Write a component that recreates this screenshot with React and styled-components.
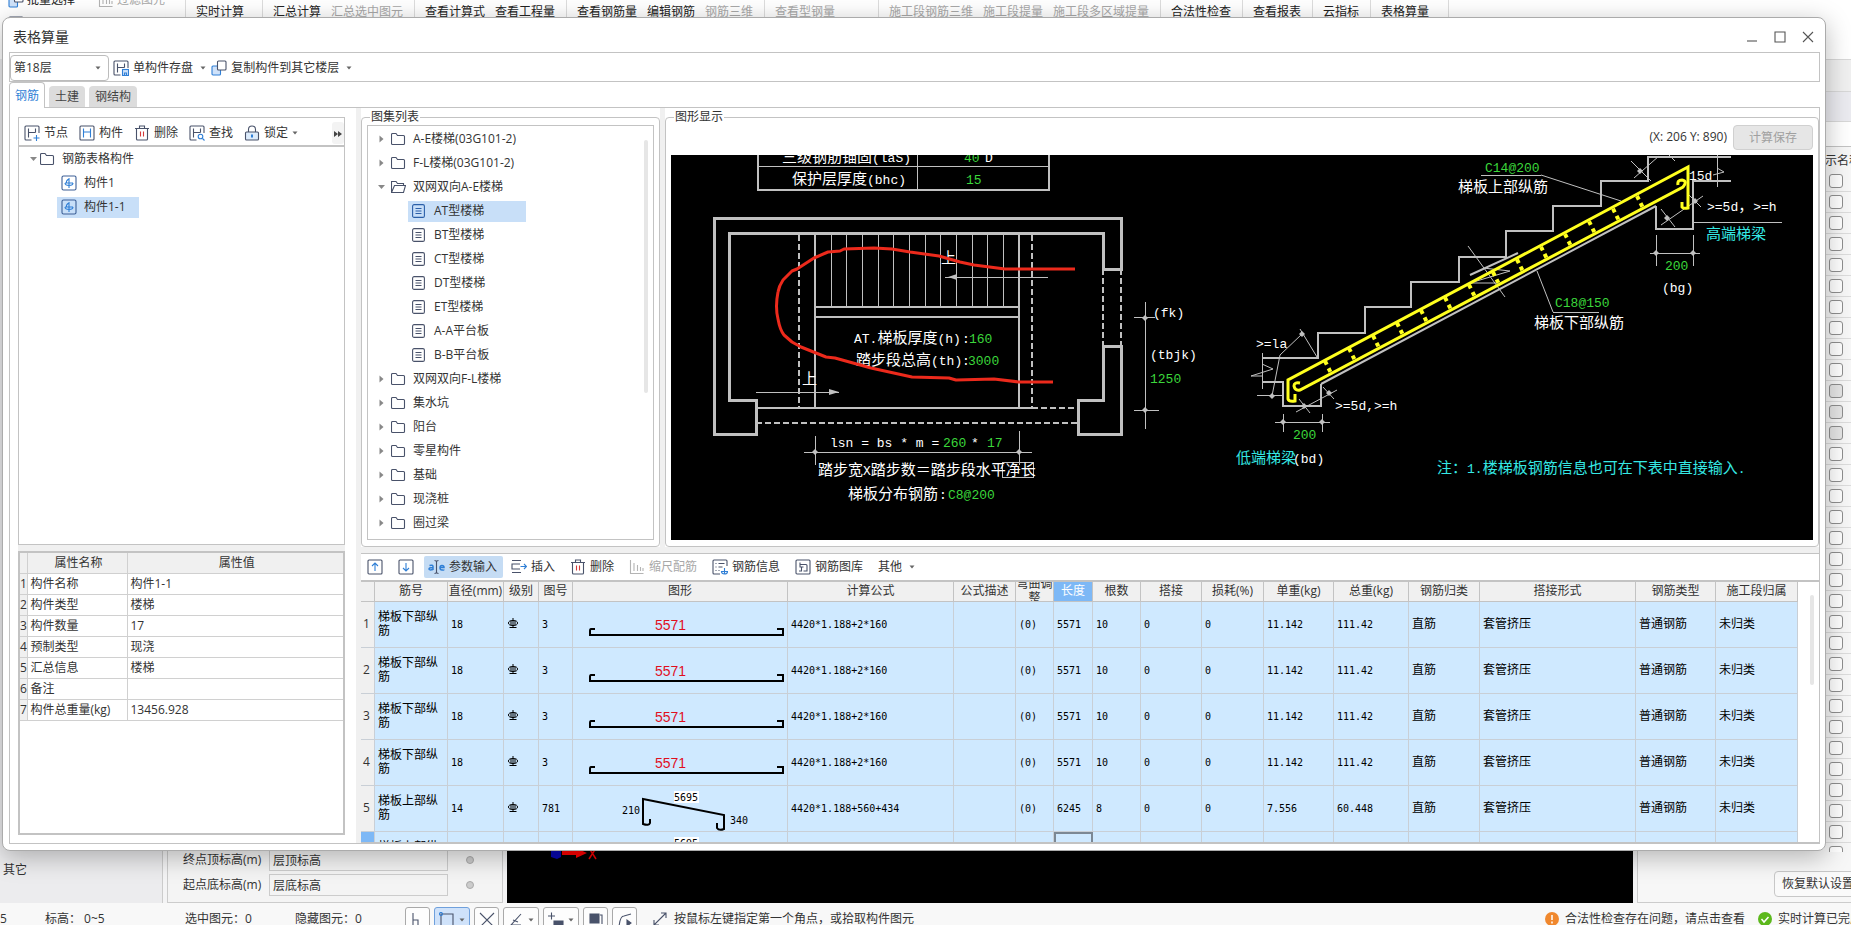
import React from 'react'
import styled, { createGlobalStyle, css } from 'styled-components'

const GlobalStyle = createGlobalStyle`
* {
  box-sizing: border-box;
}
body {
  margin: 0;
  overflow: hidden;
  background: #fff;
}
body, button, input, select, table {
  font-family: "Open Sans", "Noto Sans CJK SC", sans-serif;
  font-size: 12px;
  line-height: 16px;
  color: #333;
}
button {
  border: 0;
  padding: 0;
  background: none;
  white-space: nowrap;
}
`

const line = '#c3c3c3'
const ink = '#49526a'
const blue = '#2f7fd6'

/* ---------- main window behind the dialog ---------- */

const Shell = styled.div`
  position: relative;
  display: flex;
  flex-direction: column;
  height: 100vh;
  overflow: hidden;
  background: #f4f4f5;
`
const Ribbon = styled.header`
  display: flex;
  flex: none;
  height: 59px;
  background: #fff;
`
const RibbonTools = styled.div`
  width: 186px;
  padding-left: 8px;
  border-right: 1px solid #ddd;
  margin-top: -10px;
`
const ToolLine = styled.div`
  display: flex;
  align-items: center;
  gap: 3px;
  height: 20px;
  margin-bottom: 4px;
`
const RibbonGroup = styled.div`
  display: flex;
  gap: 10px;
  width: ${p => p.$w}px;
  padding: 4px 0 0 10px;
  border-right: 1px solid #ddd;
`
const RibbonItem = styled.button`
  height: 16px;
  color: ${p => (p.disabled ? '#a8a8a8' : '#222')};
`
const Workspace = styled.main`
  display: flex;
  flex: 1;
  min-height: 0;
`
const NavDock = styled.nav`
  display: flex;
  flex-direction: column;
  justify-content: flex-end;
  width: 163px;
  padding: 0 3px 25px;
  background: #ececee;
  border-right: 1px solid #ccc;
`
const PropDock = styled.section`
  display: flex;
  flex-direction: column;
  justify-content: flex-end;
  gap: 3px;
  width: 336px;
  margin-left: 4px;
  padding-bottom: 6px;
  border: 1px solid #ccc;
  background: #f4f4f4;
`
const PropRow = styled.div`
  display: grid;
  grid-template-columns: 80px 179px 8px;
  align-items: center;
  gap: 0 6px;
  padding-left: 15px;
  input {
    height: 22px;
    padding: 0 3px;
    border: 1px solid #ccc;
    background: #f4f4f4;
  }
`
const Dot = styled.span`
  width: 8px;
  height: 8px;
  margin-left: 12px;
  border: 1px solid #aaa;
  border-radius: 50%;
  background: #ccc;
`
const ModelView = styled.section`
  display: flex;
  align-items: flex-end;
  flex: 1;
  margin-left: 4px;
  padding: 0 0 42px 44px;
  background: #000;
`
const LayerDock = styled.aside`
  display: flex;
  flex-direction: column;
  width: 214px;
  margin-left: 4px;
  border-left: 1px solid #ccc;
  border-bottom: 1px solid #ccc;
  background: #f7f7f7;
`
const DockBand = styled.div`
  flex: none;
  height: ${p => p.$h}px;
  border-top: 1px solid #d8d8d8;
  background: ${p => p.$bg};
`
const DockHead = styled.div`
  flex: none;
  height: 25px;
  padding: 6px 0 0 175px;
  white-space: nowrap;
  overflow: hidden;
  border-top: 1px solid ${line};
`
const LayerList = styled.div`
  flex: 1;
  min-height: 0;
  overflow: hidden;
`
const LayerRow = styled.div`
  display: flex;
  align-items: center;
  justify-content: flex-end;
  height: 21px;
  padding-right: 8px;
  border-bottom: 1px solid #dcdcdc;
`
const Tick = styled.input`
  appearance: none;
  width: 14px;
  height: 14px;
  margin: 0;
  border: 1px solid #8f8f8f;
  border-radius: 3px;
  background: ${p => (p.disabled ? '#e6e6e6' : '#fff')};
`
const DockFoot = styled.div`
  display: flex;
  flex: none;
  justify-content: flex-end;
  height: 50px;
  padding-top: 19px;
  overflow: hidden;
`
const ResetButton = styled.button`
  flex: none;
  width: 96px;
  height: 26px;
  margin-right: -19px;
  padding-right: 8px;
  border: 1px solid #c8c8c8;
  border-radius: 4px;
  background: #fafafa;
`
const StatusBar = styled.footer`
  display: flex;
  flex: none;
  gap: 6px;
  height: 22px;
  overflow: hidden;
  line-height: 32px;
  white-space: nowrap;
  background: #f8f8f8;
`
const StatusText = styled.span`
  display: flex;
  align-items: center;
  flex: none;
  gap: 6px;
  width: ${p => (p.$w ? p.$w + 'px' : 'auto')};
  height: 32px;
  svg {
    flex: none;
  }
`
const StatusTools = styled.div`
  display: flex;
  gap: 4px;
  padding: 4px 9px 0 0;
`
const SnapButton = styled.button`
  display: flex;
  flex: none;
  align-items: center;
  justify-content: center;
  gap: 4px;
  width: ${p => (p.$wide ? 36 : 25)}px;
  height: 26px;
  border: 1px solid ${p => (p.$on ? '#6fa0dc' : '#a9a9a9')};
  border-radius: 3px;
  background: ${p => (p.$on ? '#cfe2fa' : '#fdfdfd')};
`
const Spacer = styled.span`
  flex: 1;
`

/* ---------- dialog ---------- */

const Dialog = styled.section`
  position: absolute;
  top: 17px;
  right: 25px;
  bottom: 74px;
  left: 2px;
  display: flex;
  flex-direction: column;
  padding: 0 5px 6px 6px;
  border: 1px solid #ababab;
  border-radius: 8px;
  background: #fff;
  box-shadow: 0 6px 26px rgba(0, 0, 0, 0.28);
`
const TitleBar = styled.div`
  display: flex;
  align-items: center;
  gap: 12px;
  flex: none;
  height: 34px;
  padding: 4px 4px 0;
`
const Title = styled.h1`
  flex: 1;
  margin: 0;
  font-size: 14px;
  font-weight: 400;
  line-height: 20px;
`
const WinButton = styled.button`
  display: flex;
  justify-content: center;
  width: 16px;
`
const FloorBar = styled.div`
  display: flex;
  align-items: center;
  flex: none;
  gap: 5px;
  height: 30px;
  padding-top: 1px;
  border: 1px solid ${line};
`
const FloorPick = styled.label`
  display: grid;
  grid-template-columns: 1fr 14px;
  align-items: center;
  width: 99px;
  margin-right: -1px;
  select, svg {
    grid-row: 1;
  }
  select {
    grid-column: 1 / 3;
    height: 26px;
    padding: 0 3px;
    appearance: none;
    border: 1px solid #bcbcbc;
    border-radius: 4px;
    background: #fff;
  }
  svg {
    grid-column: 2;
  }
`
const Tool = styled.button`
  display: flex;
  align-items: center;
  flex: none;
  gap: 4px;
  height: 22px;
  color: ${p => (p.disabled ? '#a8a8a8' : '#333')};
  ${p => p.$on && css`
    margin: 0 -7px 0 -5px;
    padding: 0 6px 0 4px;
    border-radius: 2px;
    background: #c5dcf4;
  `}
`
const Tabs = styled.div`
  display: flex;
  align-items: flex-end;
  gap: 4px;
  flex: none;
  height: 25px;
`
const Tab = styled.button`
  height: ${p => (p.$on ? 26 : 21)}px;
  padding: 0 6px;
  border-radius: 4px 4px 0 0;
  background: ${p => (p.$on ? '#fff' : '#dcdcdc')};
  color: ${p => (p.$on ? blue : '#444')};
  ${p => p.$on && css`
    margin-bottom: -1px;
    border: 1px solid ${line};
    border-bottom: 0;
    padding: 0 5px;
    z-index: 1;
  `}
`
const Page = styled.div`
  display: flex;
  flex: 1;
  min-height: 0;
  border: 1px solid ${line};
`
const LeftPane = styled.div`
  display: grid;
  grid-template-rows: minmax(0, 427fr) minmax(0, 284fr);
  gap: 6px;
  width: 346px;
  flex: none;
  padding: 9px 11px 8px 8px;
`
const TreePane = styled.div`
  display: flex;
  flex-direction: column;
  min-width: 0;
  border: 1px solid ${line};
  box-shadow: 0 6px 0 #f0f0f0;
`
const TreeTools = styled.div`
  display: flex;
  align-items: center;
  gap: 11px;
  height: 29px;
  padding: 2px 0 0 5px;
  border-bottom: 2px solid ${line};
`
const MoreButton = styled.button`
  width: 12px;
  height: 22px;
  margin-left: auto;
  border-radius: 3px;
  background: #f3f3f3;
`
const TreeRow = styled.button`
  display: flex;
  align-items: center;
  height: 24px;
  padding-left: ${p => p.$pad}px;
  text-align: left;
`
const TreeLabel = styled.span`
  display: flex;
  align-items: center;
  gap: ${p => (p.$wide ? 9 : 7)}px;
  height: 21px;
  padding-left: 4px;
  padding-right: ${p => (p.$wide ? 42 : 13)}px;
  background: ${p => (p.$on ? '#c8dff8' : 'none')};
`
const RootLabel = styled.span`
  display: flex;
  align-items: center;
  gap: 7px;
  padding-left: ${p => (p.$tight ? 3 : 6)}px;
`
const PropPane = styled.div`
  border: 2px solid ${line};
  background: #fff;
`
const PropTable = styled.table`
  width: 100%;
  table-layout: fixed;
  border-collapse: collapse;
  th, td {
    height: 21px;
    padding: 0 0 0 3px;
    border-right: 1px solid #d0d0d0;
    border-bottom: 1px solid #d0d0d0;
    font-weight: 400;
    text-align: left;
    white-space: nowrap;
  }
  th:last-child, td:last-child {
    border-right: 0;
  }
  thead th {
    text-align: center;
    background: #f0f0f0;
  }
  tbody th {
    padding: 0;
    background: #f0f0f0;
  }
`
const Splitter = styled.div`
  flex: none;
  width: 5px;
  background: #f0f0f0;
`
const RightPane = styled.div`
  display: grid;
  flex: 1;
  min-width: 0;
  grid-template-rows: minmax(0, 438fr) minmax(0, 290fr);
  gap: 6px;
  background: #f0f0f0;
`
const TopRow = styled.div`
  display: grid;
  grid-template-columns: 299px minmax(0, 1fr);
  gap: 5px;
`
const White = styled.div`
  display: flex;
  min-width: 0;
  min-height: 0;
  padding-top: 1px;
  background: #fff;
`
const Group = styled.fieldset`
  display: flex;
  flex: 1;
  flex-direction: column;
  min-width: 0;
  margin: 0;
  padding: 0 5px 6px;
  border: 1px solid ${line};
  border-radius: 4px;
  legend {
    margin-left: 3px;
    padding: 0 1px;
    line-height: 16px;
  }
`
const AtlasList = styled.div`
  display: flex;
  flex: 1;
  justify-content: space-between;
  min-height: 0;
  overflow: hidden;
  padding: 1px 5px 0 0;
  border: 1px solid ${line};
`
const AtlasRows = styled.div`
  display: flex;
  flex-direction: column;
`
const ScrollThumb = styled.div`
  width: 4px;
  height: ${p => p.$h}px;
  margin-top: 13px;
  border-radius: 2px;
  background: #e6e6e6;
`
const ViewHead = styled.div`
  display: flex;
  justify-content: flex-end;
  gap: 6px;
  flex: none;
  height: 30px;
  line-height: 24px;
`
const SaveButton = styled.button`
  width: 80px;
  height: 25px;
  border: 1px solid #d0d0d0;
  border-radius: 4px;
  background: #e6e6e6;
  color: #a0a0a0;
`
const Canvas = styled.div`
  flex: 1;
  min-height: 0;
  overflow: hidden;
  background: #000;
  svg {
    display: block;
    width: 100%;
    height: 100%;
  }
`
const BarPane = styled.div`
  display: flex;
  flex-direction: column;
  min-width: 0;
  min-height: 0;
  border-top: 1px solid ${line};
  border-bottom: 1px solid ${line};
  background: #fff;
`
const BarTools = styled.div`
  display: flex;
  align-items: center;
  flex: none;
  gap: 15px;
  height: 28px;
  padding-left: 6px;
  border-bottom: 2px solid ${line};
`
const BarBody = styled.div`
  display: flex;
  justify-content: space-between;
  flex: 1;
  min-height: 0;
  padding-right: 5px;
  overflow: hidden;
`
const BarTable = styled.table`
  width: calc(100% - 16px);
  height: fit-content;
  table-layout: fixed;
  border-collapse: separate;
  border-spacing: 0;
  th, td {
    padding: 0 0 0 3px;
    font-weight: 400;
    text-align: left;
    border-right: 1px solid #c9cfd6;
    border-bottom: 1px solid #c9cfd6;
  }
  thead th {
    height: 20px;
    padding: 0;
    background: #f0f0f0;
    border-color: ${line};
  }
  tbody td {
    height: 46px;
    color: #000;
    line-height: 14px;
    background: #cfe9ff;
  }
  tbody th {
    background: #f0f0f0;
  }
`
const HeadCell = styled.div`
  display: flex;
  align-items: center;
  justify-content: center;
  height: 19px;
  overflow: hidden;
  text-align: center;
  line-height: 14px;
  ${p => p.$on && css`
    background: #7db8f6;
    color: #fff;
  `}
`
const Num = styled.span`
  font-family: "DejaVu Sans Mono", monospace;
  font-size: 10px;
`
const ShapeCell = styled.td`
  && {
    padding: 0;
  }
  svg {
    display: block;
  }
`
const RowNo = styled.th`
  && {
    padding: 0 0 0 2px;
    ${p => p.$on && 'background: #7db8f6; color: #7db8f6;'}
  }
`
const PickedCell = styled.td`
  && {
    border: 2px solid #7c8894;
  }
`

/* ---------- icons ---------- */

const Ico = ({ w = 16, h = 16, c = ink, children }) => (
  <svg width={w} height={h} viewBox={`0 0 ${w} ${h}`} fill="none" stroke={c} strokeWidth="1.1" aria-hidden="true">
    {children}
  </svg>
)
const Caret = () => (
  <svg width="6" height="4" viewBox="0 0 6 4" aria-hidden="true"><path d="M0.5 0.5h5L3 3.5z" fill="#666" /></svg>
)
const Twist = ({ open }) => (
  <svg width="7" height="8" viewBox="0 0 7 8" aria-hidden="true">
    <path d={open ? 'M0 2h7L3.500 6z' : 'M1.500 0.500v7L5.500 4z'} fill="#888" />
  </svg>
)
const FolderIcon = ({ open }) => (
  <Ico w={15} h={14}>
    {open
      ? <path d="M0.500 12.500V1.500h4.500l1.500 2h6v2M0.500 12.500L3.500 5.500H14.500L12.500 12.500z" />
      : <path d="M0.500 11.500V2.500q0-1 1-1h3.500l1.500 2h6q1 0 1 1v7q0 1-1 1h-11q-1 0-1-1z" />}
  </Ico>
)
const DocIcon = ({ on }) => (
  <Ico w={13} h={14} c={on ? '#2b5fa8' : ink}>
    <rect x="0.600" y="0.600" width="11.800" height="12.800" rx="1.500" />
    <path d="M3.500 4.500h6M3.500 7h6M3.500 9.500h6" />
  </Ico>
)
const PartIcon = () => (
  <Ico c="#3c5f96">
    <rect x="1" y="1" width="14" height="14" rx="1.500" />
    <path d="M8 3v10M4 8h8M8 3.500l-2.500 2.500M5.500 6v2M12 8q0 2.500-4 2.500T4 8" stroke={blue} />
  </Ico>
)
const FrameH = ({ children, cut }) => (
  <Ico>
    <path d={cut ? 'M7.500 15H2q-1 0-1-1V2q0-1 1-1h12q1 0 1 1V8' : 'M2 1h12q1 0 1 1v12q0 1-1 1H2q-1 0-1-1V2q0-1 1-1z'} />
    <path d={cut ? 'M4.500 3.500v9M4.500 7.500h7M11.500 3.500v4' : 'M4.500 3.500v9M4.500 7h7M11.500 3.500v9'} stroke={cut ? ink : blue} />
    <g stroke={blue}>{children}</g>
  </Ico>
)
const NodeIcon = () => <FrameH cut><path d="M12.500 10v6M9.500 13h6" /></FrameH>
const PieceIcon = () => <FrameH />
const FindIcon = () => <FrameH cut><circle cx="11.500" cy="11.500" r="2.300" /><path d="M13.500 13.500l2 2" /></FrameH>
const SaveIcon = () => <FrameH cut><rect x="9.500" y="9.500" width="6" height="6" fill="#cfe2fa" /><path d="M11.500 15v-2h2v2" /></FrameH>
const TrashIcon = () => (
  <Ico>
    <path d="M1 3.500h14M5.500 3.500V1h5v2.500M2.500 3.500V14q0 1 1 1h9q1 0 1-1V3.500" />
    <path d="M6.500 6.500v5M9.500 6.500v5" stroke="#d43a3a" />
  </Ico>
)
const LockIcon = () => (
  <Ico>
    <path d="M4.500 7V4.500a3.500 3.500 0 0 1 7 0V7" />
    <rect x="1.500" y="7" width="13" height="8" rx="1" fill="#dcebfb" />
    <path d="M8 9.500v3" stroke={blue} strokeWidth="2" />
  </Ico>
)
const CopyIcon = () => (
  <Ico>
    <rect x="1" y="6" width="8.500" height="9" rx="1" fill="#cfe2fa" stroke={blue} />
    <rect x="6.500" y="1" width="8.500" height="9" rx="1" fill="#fff" />
  </Ico>
)
const MoveIcon = ({ down }) => (
  <Ico>
    <rect x="1" y="1" width="14" height="14" rx="1" />
    <path d={down ? 'M8 4v8M5 9l3 3 3-3' : 'M8 12V4M5 7l3-3 3 3'} stroke={blue} />
  </Ico>
)
const InputIcon = () => (
  <Ico w={17} c={blue}>
    <path d="M6.500 1.500q2 0 2 1.500v10q0 1.500-2 1.500M10.500 1.500q-2 0-2 1.500M10.500 14.500q-2 0-2-1.500" stroke={ink} />
    <path d="M1.500 6.500q3.500-1 3.500 1v3.500M5 8.500q-4 0-4 1.500t4 0.500M12 8.500h4q0-2-2-2t-2 2.200 2 2.300 2-0.500" strokeWidth="1.500" />
  </Ico>
)
const InsertIcon = () => (
  <Ico>
    <path d="M1 1.500h9M1 13.500h9M9 5H1v5h8" />
    <path d="M9.500 7.500h6M13 5l2.500 2.500L13 10" stroke={blue} />
  </Ico>
)
const ScaleIcon = () => <Ico c="#b4b4b4"><path d="M1.500 1v13.500h13M5 4v8M8.500 6v6M11.500 8v4M14 9v3" /></Ico>
const InfoIcon = () => (
  <Ico>
    <path d="M8 15H2q-1 0-1-1V2q0-1 1-1h12q1 0 1 1V7M3.500 4.500h1M6.500 4.500h6M3.500 8h1M6.500 8h4M3.500 11.500h1M6.500 11.500h1" />
    <path d="M12.500 9v6M9.500 12.500q0 2.500 3 2.500t3-2.500zM9.500 12.500h6" stroke={blue} />
  </Ico>
)
const LibraryIcon = () => (
  <Ico>
    <rect x="1" y="1" width="14" height="14" rx="1" />
    <path d="M5 3.500v4M5 5.500h6q1 0 1 1V12H8.500M8.500 8H4.500M4 12h2.500V8" />
  </Ico>
)
const GradeMark = () => (
  <Ico w={12} h={12} c="#000">
    <ellipse cx="6" cy="6" rx="4.500" ry="2.500" strokeWidth="1" />
    <path d="M6 1v10M2.500 10.500h7M4 4v4M8 4v4" strokeWidth="1" />
  </Ico>
)

/* ---------- CAD drawing ---------- */

const G = '#3bd63b'
const C = '#35e8e4'

// latin runs use a narrow mono face, CJK runs keep the 15px square
const Note = ({ x, y, c = '#fff', t }) => (
  <text x={x} y={y + 5} fill={c} fontSize="15" fontFamily='"Noto Sans CJK SC", sans-serif' xmlSpace="preserve">
    {t.match(/[\x20-\x7e]+|[^\x20-\x7e]+/g).map((run, i) =>
      run.charCodeAt(0) < 127
        ? <tspan key={i} fontSize="13" fontFamily='"Liberation Mono", monospace'>{run}</tspan>
        : <tspan key={i}>{run}</tspan>
    )}
  </text>
)
const Knot = ({ x, y }) => <path d={`M${x - 3} ${y}l3-3 3 3-3 3z`} fill="#c0c0c0" stroke="none" />

const notes = [
  [111, 2, '三级钢筋锚固(laS)'], [293, 2, '40', G], [314, 2, 'D'],
  [121, 24, '保护层厚度(bhc)'], [295, 24, '15', G],
  [270, 103, '上'], [131, 224, '上'],
  [183, 183, 'AT.梯板厚度(h)'], [291, 183, ':'], [298, 183, '160', G],
  [185, 205, '踏步段总高(th)'], [291, 205, ':'], [297, 205, '3000', G],
  [482, 157, '(fk)'], [479, 199, '(tbjk)'], [479, 223, '1250', G],
  [159, 287, 'lsn = bs * m ='], [272, 287, '260', G], [300, 287, '*'], [316, 287, '17', G],
  [147, 315, '踏步宽X踏步数＝踏步段水平净长'],
  [177, 339, '梯板分布钢筋'], [268, 339, ':'], [277, 339, 'C8@200', G],
  [814, 12, 'C14@200', G], [787, 32, '梯板上部纵筋'],
  [884, 147, 'C18@150', G], [863, 168, '梯板下部纵筋'],
  [1018, 20, '15d'], [1036, 51, '>=5d，>=h'], [1035, 79, '高端梯梁', C],
  [994, 110, '200', G], [991, 132, '(bg)'],
  [585, 188, '>=la'], [664, 250, '>=5d,'], [703, 250, '>=h'],
  [622, 279, '200', G], [565, 303, '低端梯梁', C], [622, 303, '(bd)'],
  [766, 313, '注：1.楼梯板钢筋信息也可在下表中直接输入.', C],
]
const treads = [160, 175, 191, 207, 222, 238, 254, 269, 285, 301, 316, 332]
const ties = Array.from({ length: 14 }, (_, i) => [966 - i * 24, 41 + i * 12.7])

const StairDrawing = () => (
  <svg role="img" aria-label="AT型楼梯">
    <g fill="none" stroke="#c0c0c0" strokeWidth="2" shapeRendering="crispEdges">
      <path d="M87-2V35H378V-2" />
      <path d="M87 11.500H378M246.500 0V35" strokeWidth="1" />
      <path d="M450 114V63.500H43.500V279.500H85.500V245.500H58.500V78.500H432V114zM432 191H450V279.500H407.500V245.500H432z" strokeWidth="3" />
      <path d="M431.500 114V191M449.500 114V191M128 80V252M361 80V252M361 253H407M85 268H407" strokeDasharray="6 3" />
      <path d="M144 79V253M348 79V253M85 253H361M144 152H348M144 162H348" />
      {treads.map(x => <path key={x} d={`M${x}.5 79V152`} strokeWidth="1" />)}
      <path d="M274 122.500H377M85 237.500H168M474.500 147V274M463 162.500H484M463 255.500H488M133 297.500H361M144.500 281V310M348.500 276V310M331.500 307.500h31v15h-31z" strokeWidth="1" />
      <path d="M1060 2H976.500V26H929.500V51H882V76H835V102H788V127H740V152H694V178H647V203H591" />
      <path d="M1060 26H1022V74H985V51" />
      <path d="M591 227H612V251H650V229" />
      <path d="M591.500 198V234M586 240.500H612M612.500 259V277M651.500 259V277M604 267.500H659M985.500 80V111M1022.500 80V111M979 98.500H1029M1046.500 0V32M1022 67.500H1111M810 20.500H870M882 157.500H928" strokeWidth="1" />
    </g>
    <g fill="none" stroke="#c0c0c0">
      <path d="M650 229L985 51M799 120L847 98" strokeWidth="2" />
      <path d="M870 20L950 46M882 157L866 116M797 91L834 142M799 128L839 116L812 113M799 128H827M591 209L602 214L580 221H591M601 241L609 200L631 179M629 174L646 202M625 257L666 235M628 244L639 258M652 232L663 244M960 6L980 26M963 23L988 1M990 54L1004 72M990 70L1032 41M1018 40L1030 52M1046 13L1053 17L1042 20M998 0L1004 6" />
    </g>
    <path d="M277 122l9-3v6zM168 237l-10-3v6z" fill="#c0c0c0" />
    <Knot x={474} y={163} /><Knot x={474} y={255} /><Knot x={144} y={297} /><Knot x={348} y={297} />
    <Knot x={612} y={267} /><Knot x={651} y={267} /><Knot x={601} y={241} /><Knot x={631} y={179} />
    <Knot x={985} y={98} /><Knot x={1022} y={98} /><Knot x={969} y={16} /><Knot x={996} y={63} />
    <Knot x={658} y={238} /><Knot x={633} y={251} /><Knot x={1024} y={46} />
    <g fill="none" stroke="#ffff1e" strokeWidth="3">
      <path d="M1011 47V52Q1012 54 1017 53V12L617 225V244Q618 247 624 246V239" />
      <path d="M629 228Q623 227 623 231Q624 236 629 235L1012 32Q1017 26 1011 25Q1006 25 1007 30" />
      {ties.map(([x, y]) => <path key={x} d={`M${x} ${y}l6 12`} strokeDasharray="4 4" strokeWidth="4" />)}
    </g>
    {notes.map(([x, y, t, c]) => <Note key={`${x}-${y}`} x={x} y={y} t={t} c={c} />)}
    <path
      d="M404 114H334L303 110L289 107L268 101L239 97L221 94L203 93L173 94L169 96L157 97L143 103L126 114L121 116L112 125Q108 131 107 137Q104 152 107 164Q109 175 113 180L121 187L130 192L155 202L164 203L200 213L241 222L278 223L285 225L323 224L348 227H382"
      fill="none" stroke="#ec2a1c" strokeWidth="3" strokeLinejoin="round"
    />
  </svg>
)

/* ---------- bar table ---------- */

const columns = [
  ['', 14], ['筋号', 73], ['直径(mm)', 56], ['级别', 35], ['图号', 34], ['图形', 215], ['计算公式', 166],
  ['公式描述', 62], ['弯曲调整', 38], ['长度', 39], ['根数', 48], ['搭接', 61], ['损耗(%)', 62],
  ['单重(kg)', 70], ['总重(kg)', 75], ['钢筋归类', 71], ['搭接形式', 156], ['钢筋类型', 80], ['施工段归属', 82],
]
const lower = { name: '梯板下部纵筋', dia: '18', no: '3', calc: '4420*1.188+2*160', len: '5571', qty: '10', unit: '11.142', total: '111.42' }
const upper = { name: '梯板上部纵筋', dia: '14', no: '781', calc: '4420*1.188+560+434', len: '6245', qty: '8', unit: '7.556', total: '60.448' }
const bars = [lower, lower, lower, lower, upper, { ...upper, picked: true }]

const BarShape = ({ bent }) => (
  <svg width="214" height="45" fill="none" stroke="#000" strokeWidth="2">
    {bent ? (
      <>
        <path d="M77 33V37Q76 40 70 38V13L151 29V43Q146 45 144 42V37" />
        <rect x="101" y="5" width="25" height="12" fill="#fff" stroke="none" />
        <g fill="#000" stroke="none" fontSize="10" fontFamily='"DejaVu Sans Mono", monospace'>
          <text x="101" y="15">5695</text>
          <text x="49" y="28">210</text>
          <text x="157" y="38">340</text>
        </g>
      </>
    ) : (
      <>
        <path d="M22 27H18Q17 27 17 29V33H210V27H204" />
        <text x="82" y="28" fill="#e00f1e" stroke="none" fontSize="14" fontFamily='"Liberation Sans", sans-serif'>5571</text>
      </>
    )}
  </svg>
)

const BarRow = ({ bar, index }) => {
  const Len = bar.picked ? PickedCell : 'td'
  return (
    <tr>
      <RowNo $on={bar.picked}>{index}</RowNo>
      <td>{bar.name}</td>
      <td><Num>{bar.dia}</Num></td>
      <td><GradeMark /></td>
      <td><Num>{bar.no}</Num></td>
      <ShapeCell><BarShape bent={bar.no === '781'} /></ShapeCell>
      <td><Num>{bar.calc}</Num></td>
      <td />
      <td><Num>(0)</Num></td>
      <Len><Num>{bar.len}</Num></Len>
      <td><Num>{bar.qty}</Num></td>
      <td><Num>0</Num></td>
      <td><Num>0</Num></td>
      <td><Num>{bar.unit}</Num></td>
      <td><Num>{bar.total}</Num></td>
      <td>直筋</td>
      <td>套管挤压</td>
      <td>普通钢筋</td>
      <td>未归类</td>
    </tr>
  )
}

const ribbon = [
  [77, ['实时计算']], [152, ['汇总计算', '-汇总选中图元']], [152, ['查看计算式', '查看工程量']],
  [198, ['查看钢筋量', '编辑钢筋', '-钢筋三维']], [114, ['-查看型钢量']],
  [282, ['-施工段钢筋三维', '-施工段提量', '-施工段多区域提量']], [82, ['合法性检查']],
  [70, ['查看报表']], [58, ['云指标']], [78, ['表格算量']],
]
const atlas = [
  ['A-E楼梯(03G101-2)'], ['F-L楼梯(03G101-2)'],
  ['双网双向A-E楼梯', ['AT型楼梯', 'BT型楼梯', 'CT型楼梯', 'DT型楼梯', 'ET型楼梯', 'A-A平台板', 'B-B平台板']],
  ['双网双向F-L楼梯'], ['集水坑'], ['阳台'], ['零星构件'], ['基础'], ['现浇桩'], ['圈过梁'],
]
const props = [
  ['构件名称', '构件1-1'], ['构件类型', '楼梯'], ['构件数量', '17'], ['预制类型', '现浇'],
  ['汇总信息', '楼梯'], ['备注', ''], ['构件总重量(kg)', '13456.928'],
]

const MainWindow = () => (
  <>
    <Ribbon>
      <RibbonTools>
        <ToolLine>
          <CopyIcon /><RibbonItem>批量选择</RibbonItem>
          <Spacer /><ScaleIcon /><RibbonItem disabled>过滤图元</RibbonItem><Spacer />
        </ToolLine>
        <ToolLine><PieceIcon /></ToolLine>
      </RibbonTools>
      {ribbon.map(([w, items]) => (
        <RibbonGroup key={w + items[0]} $w={w}>
          {items.map(t => <RibbonItem key={t} disabled={t[0] === '-'}>{t.replace('-', '')}</RibbonItem>)}
        </RibbonGroup>
      ))}
    </Ribbon>
    <Workspace>
      <NavDock>其它</NavDock>
      <PropDock>
        <PropRow><label htmlFor="end-top">终点顶标高(m)</label><input id="end-top" defaultValue="层顶标高" /><Dot /></PropRow>
        <PropRow><label htmlFor="start-base">起点底标高(m)</label><input id="start-base" defaultValue="层底标高" /><Dot /></PropRow>
      </PropDock>
      <ModelView>
        <svg width="46" height="14" aria-hidden="true">
          <path d="M0 2h10v8l-4 2-6-2z" fill="#0808b0" />
          <path d="M11 4h14V1l11 5-11 5V8H11z" fill="#f00" />
          <path d="M38 1l7 11M45 1l-7 11" stroke="#e00" strokeWidth="1.500" />
        </svg>
      </ModelView>
      <LayerDock>
        <DockBand $h={32} $bg="#f0f0f0" />
        <DockBand $h={30} $bg="#ebebf0" />
        <DockBand $h={25} $bg="#fff" />
        <DockHead>显示名称</DockHead>
        <LayerList>
          {Array.from({ length: 33 }, (_, i) => (
            <LayerRow key={i}><Tick type="checkbox" aria-label={`图层${i + 1}`} disabled={i > 9 && i < 13} /></LayerRow>
          ))}
        </LayerList>
        <DockFoot><ResetButton>恢复默认设置</ResetButton></DockFoot>
      </LayerDock>
    </Workspace>
    <StatusBar>
      <StatusText $w={39}>5</StatusText>
      <StatusText $w={134}>标高： 0~5</StatusText>
      <StatusText $w={104}>选中图元：0</StatusText>
      <StatusText $w={104}>隐藏图元：0</StatusText>
      <StatusTools>
        <SnapButton aria-label="正交"><Ico><path d="M3 1v13h12M3 8h5v6" /></Ico></SnapButton>
        <SnapButton $on $wide aria-label="矩形"><Ico><path d="M2 2h12v12H2z" /><circle cx="2" cy="2" r="1.500" stroke={blue} /></Ico><Caret /></SnapButton>
        <SnapButton aria-label="交点"><Ico><path d="M1 1l14 14M15 1L1 15" /></Ico></SnapButton>
        <SnapButton $wide aria-label="角度"><Ico><path d="M13 2L3 13h10M5 8l5 2" /></Ico><Caret /></SnapButton>
        <SnapButton $wide aria-label="添加"><Ico><path d="M0 4h7M3.500 0.500v7" /><path d="M6 9h9v6H6z" fill={ink} /></Ico><Caret /></SnapButton>
        <SnapButton aria-label="图层"><Ico><path d="M2 2h9v9H2z" fill={ink} /><path d="M12 3h2v9M4 14h8" /></Ico></SnapButton>
        <SnapButton aria-label="曲线"><Ico><path d="M2 15Q3 4 7 4l7-2" /><path d="M10 8v6l4-3z" fill={ink} /></Ico></SnapButton>
      </StatusTools>
      <StatusText>
        <Ico><path d="M2 14L14 2M9 2h5v5M2 9v5h5" /></Ico>
        按鼠标左键指定第一个角点，或拾取构件图元
      </StatusText>
      <Spacer />
      <StatusText $w={207}>
        <svg width="14" height="14"><circle cx="7" cy="7" r="7" fill="#f0882e" /><path d="M7 3v5M7 9.500v2" stroke="#fff" strokeWidth="1.500" /></svg>
        合法性检查存在问题，请点击查看
      </StatusText>
      <StatusText $w={93}>
        <svg width="14" height="14"><circle cx="7" cy="7" r="7" fill="#5cb81c" /><path d="M3.500 7l2.500 3 4.500-5" fill="none" stroke="#fff" strokeWidth="1.500" /></svg>
        实时计算已完成
      </StatusText>
    </StatusBar>
  </>
)

const LeftSide = () => (
  <LeftPane>
    <TreePane>
      <TreeTools>
        <Tool><NodeIcon />节点</Tool>
        <Tool><PieceIcon />构件</Tool>
        <Tool><TrashIcon />删除</Tool>
        <Tool><FindIcon />查找</Tool>
        <Tool><LockIcon />锁定<Caret /></Tool>
        <MoreButton aria-label="更多"><svg width="8" height="6"><path d="M0 0l4 3-4 3zM4 0l4 3-4 3z" fill="#444" /></svg></MoreButton>
      </TreeTools>
      <TreeRow $pad={11}><Twist open /><RootLabel $tight><FolderIcon />钢筋表格构件</RootLabel></TreeRow>
      <TreeRow $pad={38}><TreeLabel><PartIcon />构件1</TreeLabel></TreeRow>
      <TreeRow $pad={38}><TreeLabel $on><PartIcon />构件1-1</TreeLabel></TreeRow>
    </TreePane>
    <PropPane>
      <PropTable>
        <colgroup><col style={{ width: 7 }} /><col style={{ width: 100 }} /><col /></colgroup>
        <thead><tr><th /><th>属性名称</th><th>属性值</th></tr></thead>
        <tbody>
          {props.map(([k, v], i) => <tr key={k}><th>{i + 1}</th><td>{k}</td><td>{v}</td></tr>)}
        </tbody>
      </PropTable>
    </PropPane>
  </LeftPane>
)

const AtlasTree = () => (
  <AtlasList>
    <AtlasRows>
      {atlas.map(([name, kids]) => (
        <React.Fragment key={name}>
          <TreeRow $pad={10}><Twist open={!!kids} /><RootLabel><FolderIcon open={!!kids} />{name}</RootLabel></TreeRow>
          {kids && kids.map((k, i) => (
            <TreeRow key={k} $pad={40}><TreeLabel $on={i === 0} $wide><DocIcon on={i === 0} />{k}</TreeLabel></TreeRow>
          ))}
        </React.Fragment>
      ))}
    </AtlasRows>
    <ScrollThumb $h={253} />
  </AtlasList>
)

const BarSection = () => (
  <BarPane>
    <BarTools>
      <Tool aria-label="上移"><MoveIcon /></Tool>
      <Tool aria-label="下移"><MoveIcon down /></Tool>
      <Tool $on><InputIcon />参数输入</Tool>
      <Tool><InsertIcon />插入</Tool>
      <Tool><TrashIcon />删除</Tool>
      <Tool disabled><ScaleIcon />缩尺配筋</Tool>
      <Tool><InfoIcon />钢筋信息</Tool>
      <Tool><LibraryIcon />钢筋图库</Tool>
      <Tool>其他&nbsp;<Caret /></Tool>
    </BarTools>
    <BarBody>
      <BarTable>
        <colgroup>{columns.map(([t, w]) => <col key={t} style={{ width: w }} />)}</colgroup>
        <thead>
          <tr>{columns.map(([t]) => <th key={t}><HeadCell $on={t === '长度'}>{t}</HeadCell></th>)}</tr>
        </thead>
        <tbody>{bars.map((b, i) => <BarRow key={i} bar={b} index={i + 1} />)}</tbody>
      </BarTable>
      <ScrollThumb $h={90} />
    </BarBody>
  </BarPane>
)

const App = () => {
  return (
    <Shell>
      <GlobalStyle />
      <MainWindow />
      <Dialog role="dialog" aria-labelledby="dialog-title">
        <TitleBar>
          <Title id="dialog-title">表格算量</Title>
          <WinButton aria-label="最小化"><Ico w={12} h={12} c="#555"><path d="M1 10h10" /></Ico></WinButton>
          <WinButton aria-label="最大化"><Ico w={12} h={12} c="#555"><path d="M1 1h10v10H1z" /></Ico></WinButton>
          <WinButton aria-label="关闭"><Ico w={12} h={12} c="#555"><path d="M1 1l10 10M11 1L1 11" /></Ico></WinButton>
        </TitleBar>
        <FloorBar>
          <FloorPick>
            <select aria-label="楼层" defaultValue="18"><option value="18">第18层</option></select>
            <Caret />
          </FloorPick>
          <Tool><SaveIcon />单构件存盘&nbsp;<Caret /></Tool>
          <Tool><CopyIcon />复制构件到其它楼层&nbsp;<Caret /></Tool>
        </FloorBar>
        <Tabs role="tablist">
          <Tab role="tab" $on>钢筋</Tab>
          <Tab role="tab">土建</Tab>
          <Tab role="tab">钢结构</Tab>
        </Tabs>
        <Page>
          <LeftSide />
          <Splitter />
          <RightPane>
            <TopRow>
              <White><Group><legend>图集列表</legend><AtlasTree /></Group></White>
              <White>
                <Group>
                  <legend>图形显示</legend>
                  <ViewHead>(X: 206 Y: 890)<SaveButton disabled>计算保存</SaveButton></ViewHead>
                  <Canvas><StairDrawing /></Canvas>
                </Group>
              </White>
            </TopRow>
            <BarSection />
          </RightPane>
        </Page>
      </Dialog>
    </Shell>
  )
}

export default App
